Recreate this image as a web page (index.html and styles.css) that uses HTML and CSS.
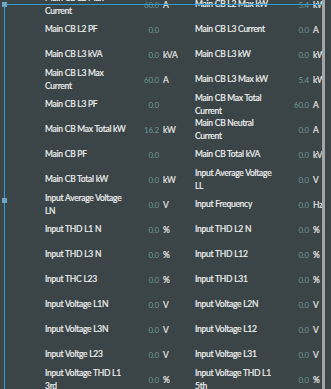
FILE: index.html
```html
<!DOCTYPE html>
<html lang="en">
<head>
    <meta charset="UTF-8">
    <meta name="viewport" content="width=device-width, initial-scale=1.0">
    <title>Main CB Readings</title>
    <link rel="stylesheet" href="styles.css">
</head>
<body>

    <div class="screen">
        <div class="panel">
            <div id="readings" class="readings"></div>

            <!-- selection frame drawn over the list -->
            <div class="sel-top"></div>
            <div class="sel-left"></div>
            <div class="handle handle-corner"></div>
            <div class="handle handle-mid"></div>
        </div>
        <div class="scrollbar"></div>
    </div>

    <script>
        // each row holds two readings: [label, value, unit]
        const rows = [
            [['Main CB L2 Max Current', '60.0', 'A'], ['Main CB L2 Max kW', '5.4', 'kW']],
            [['Main CB L2 PF', '0.0', ''], ['Main CB L3 Current', '0.0', 'A']],
            [['Main CB L3 kVA', '0.0', 'kVA'], ['Main CB L3 kW', '0.0', 'kW']],
            [['Main CB L3 Max Current', '60.0', 'A'], ['Main CB L3 Max kW', '5.4', 'kW']],
            [['Main CB L3 PF', '0.0', ''], ['Main CB Max Total Current', '60.0', 'A']],
            [['Main CB Max Total kW', '16.2', 'kW'], ['Main CB Neutral Current', '0.0', 'A']],
            [['Main CB PF', '0.0', ''], ['Main CB Total kVA', '0.0', 'kVA']],
            [['Main CB Total kW', '0.0', 'kW'], ['Input Average Voltage LL', '0.0', 'V']],
            [['Input Average Voltage LN', '0.0', 'V'], ['Input Frequency', '0.0', 'Hz']],
            [['Input THD L1 N', '0.0', '%'], ['Input THD L2 N', '0.0', '%']],
            [['Input THD L3 N', '0.0', '%'], ['Input THD L12', '0.0', '%']],
            [['Input THC L23', '0.0', '%'], ['Input THD L31', '0.0', '%']],
            [['Input Voltage L1N', '0.0', 'V'], ['Input Voltage L2N', '0.0', 'V']],
            [['Input Voltage L3N', '0.0', 'V'], ['Input Voltage L12', '0.0', 'V']],
            [['Input Voltge L23', '0.0', 'V'], ['Input Voltage L31', '0.0', 'V']],
            [['Input Voltage THD L1 3rd', '0.0', '%'], ['Input Voltage THD L1 5th', '0.0', '%']]
        ];

        const list = document.getElementById('readings');

        rows.forEach(pair => {
            pair.forEach(item => {
                const cell = document.createElement('div');
                cell.className = 'reading';
                cell.innerHTML = `
                    <span class="label">${item[0]}</span>
                    <span class="value">${item[1]}</span>
                    <span class="unit">${item[2]}</span>
                `;
                list.appendChild(cell);
            });
        });
    </script>

</body>
</html>
```

FILE: styles.css
```css
body {
    margin: 0;
    padding: 0;
    background-color: #3b4446;
    font-family: Lato, "Open Sans", sans-serif;
    overflow: hidden;
}

.screen {
    display: flex;
    height: 389px;
    width: 331px;
}

.panel {
    position: relative;
    width: 322px;
    height: 389px;
    overflow: hidden;
}

.readings {
    display: grid;
    grid-template-columns: 150px 150px;
    grid-auto-rows: 25px;
    margin-top: -8px;
    padding-left: 45px;
    width: 300px;
}

.reading {
    display: grid;
    grid-template-columns: 82px 32px auto;
    align-items: center;
}

.label {
    color: #eef0f0;
    font-size: 8.5px;
    letter-spacing: -0.25px;
    line-height: 12.5px;
    -webkit-text-stroke: 0.2px #eef0f0;
}

.value {
    color: #6e9893;
    font-size: 8px;
    letter-spacing: -0.2px;
    text-align: right;
}

.unit {
    color: #e2e4e3;
    font-size: 8.5px;
    letter-spacing: -0.2px;
    margin-left: 4px;
    white-space: nowrap;
    -webkit-text-stroke: 0.2px #e2e4e3;
}

.scrollbar {
    width: 3px;
    height: 389px;
    background-color: #a3a5a5;
}

.sel-top {
    position: absolute;
    left: 4px;
    right: 0;
    top: 4px;
    height: 1px;
    background-color: #2a9fd6;
}

.sel-left {
    position: absolute;
    left: 4px;
    top: 4px;
    bottom: 0;
    width: 1px;
    background-color: #2a9fd6;
}

.handle {
    position: absolute;
    width: 5px;
    height: 5px;
    background-color: #6fa5c2;
}

.handle-corner {
    left: 2px;
    top: 2px;
}

.handle-mid {
    left: 2px;
    top: 198px;
}
```
